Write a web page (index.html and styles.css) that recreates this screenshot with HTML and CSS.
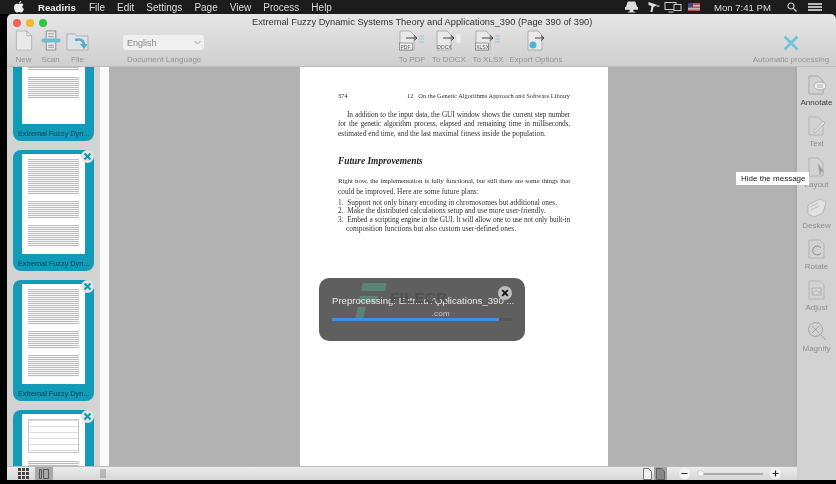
FILE: index.html
```html
<!DOCTYPE html>
<html lang="en">
<head>
<meta charset="utf-8">
<title>Readiris</title>
<link rel="stylesheet" href="styles.css">
</head>
<body>
<div class="screen">
  <header class="menubar">
    <svg class="apple" width="10" height="12" viewBox="0 0 10 12"><path fill="#eee" d="M7.2 0c.1 1-.8 2.400-2.100 2.400C5 1.200 6 .2 7.200 0zM5 3c.6 0 1.300-.5 2.300-.5.8 0 1.700.4 2.200 1.200-1.800 1.100-1.500 3.500.5 4.300-.5 1.300-1.600 3.500-2.800 3.500-.8 0-1.100-.5-2.100-.5s-1.300.5-2.100.5C1.600 11.500 0 8.800 0 6.400 0 4 1.400 2.700 2.800 2.700 3.700 2.700 4.400 3 5 3z"/></svg>
    <span class="menu strong">Readiris</span>
    <span class="menu">File</span><span class="menu">Edit</span><span class="menu">Settings</span><span class="menu">Page</span><span class="menu">View</span><span class="menu">Process</span><span class="menu">Help</span>
    <div class="status">
      <svg class="s1" width="13" height="12" viewBox="0 0 14 12"><path fill="#ddd" d="M3 0h8l2 6H1zM0 6h14v3H0zM5 9h4v2h2v1H3v-1h2z"/></svg>
      <svg class="s2" width="14" height="12" viewBox="0 0 13 12"><path fill="#ddd" d="M1 1l9 3-4 2-1 5H3l1-6-3-1z"/><path fill="#888" d="M9 4h3v2H9z"/></svg>
      <svg class="s3" width="18" height="12" viewBox="0 0 17 12" fill="none" stroke="#ccc"><rect x=".5" y="1.500" width="11" height="7"/><rect x="9.500" y="3.500" width="7" height="6" fill="#1c1c1c"/><path d="M4 11h5"/></svg>
      <svg class="s4" width="12" height="8" viewBox="0 0 12 8"><rect width="12" height="8" fill="#b55"/><rect y="2" width="12" height="1.500" fill="#bbb"/><rect y="5" width="12" height="1.500" fill="#bbb"/><rect width="5" height="4" fill="#448"/></svg>
      <span class="clock">Mon 7:41 PM</span>
      <svg class="s-search" width="10" height="10" viewBox="0 0 10 10" fill="none" stroke="#ccc" stroke-width="1.200"><circle cx="4" cy="4" r="3"/><path d="M6.300 6.300L9.500 9.500"/></svg>
      <svg class="s-list" width="14" height="8" viewBox="0 0 14 8" stroke="#eee" stroke-width="1.300"><path d="M0 1h14M0 4h14M0 7h14"/></svg>
    </div>
  </header>

  <div class="window">
    <div class="toolbar">
      <div class="traffic">
        <i class="dot red"></i><i class="dot yellow"></i><i class="dot green"></i>
        <div class="title">Extremal Fuzzy Dynamic Systems Theory and Applications_390 (Page 390 of 390)</div>
      </div>
      <div class="tools">
        <div class="tool w27">
          <svg width="18" height="22" viewBox="0 0 18 22" fill="#e9e9e9" stroke="#a8a8a8" stroke-width=".8"><path d="M1 1h11l5 5v15H1z"/><path d="M12 1v5h5" fill="none"/></svg>
          <span>New</span>
        </div>
        <div class="tool w27">
          <svg width="20" height="22" viewBox="0 0 20 22" fill="none"><path d="M5 1h10v20H5z" fill="#e6e6e6" stroke="#777" stroke-width=".8"/><path d="M7 4h6M7 7h6M7 16h6M7 18h6" stroke="#777" stroke-width=".7"/><rect x="0" y="9" width="20" height="4" rx="2" fill="#6bbdd3"/></svg>
          <span>Scan</span>
        </div>
        <div class="tool w27">
          <svg width="23" height="18" viewBox="0 0 23 18" fill="none"><path d="M1 1h8l2 2h11v14H1z" fill="#dfe3e5" stroke="#a5a5a5" stroke-width=".8"/><path d="M9 7c4-1 8-1 9 4" stroke="#55adc8" stroke-width="2.400"/><path d="M14 11h8l-4 5z" fill="#55adc8"/></svg>
          <span>File</span>
        </div>
        <div class="lang">
          <div class="select">English<svg width="7" height="5" viewBox="0 0 7 5" fill="none" stroke="#999" stroke-width="1"><path d="M.5 1L3.500 4 6.500 1"/></svg></div>
          <span class="lang-label">Document Language</span>
        </div>
        <div class="tool w36 export-first">
          <svg width="26" height="21" viewBox="0 0 26 21" fill="none"><path d="M1 1h10l4 4v15H1z" fill="#e9e9e9" stroke="#9a9a9a" stroke-width=".7"/><path d="M7 8h11M15 5.500L18 8l-3 2.500" stroke="#333" stroke-width=".9"/><rect x=".5" y="13" width="13" height="7" fill="#eee" stroke="#666" stroke-width=".6"/><text x="1.500" y="19" class="ft">PDF</text><path d="M20 6h5M20 9h5M20 12h5" stroke="#9fbfcf" stroke-width="1"/></svg>
          <span>To PDF</span>
        </div>
        <div class="tool w38">
          <svg width="26" height="21" viewBox="0 0 26 21" fill="none"><path d="M1 1h10l4 4v15H1z" fill="#e9e9e9" stroke="#9a9a9a" stroke-width=".7"/><path d="M7 8h11M15 5.500L18 8l-3 2.500" stroke="#333" stroke-width=".9"/><text x="1.200" y="19" class="ft">DOCX</text><rect x="20" y="4" width="5" height="9" fill="#ececec" stroke="#ddd" stroke-width=".5"/></svg>
          <span>To DOCX</span>
        </div>
        <div class="tool w40">
          <svg width="26" height="21" viewBox="0 0 26 21" fill="none"><path d="M1 1h10l4 4v15H1z" fill="#e9e9e9" stroke="#9a9a9a" stroke-width=".7"/><path d="M7 8h11M15 5.500L18 8l-3 2.500" stroke="#333" stroke-width=".9"/><rect x=".5" y="13" width="13" height="7" fill="#eee" stroke="#666" stroke-width=".6"/><text x="1.200" y="19" class="ft">XLSX</text><path d="M20 6h5M20 9h5M20 12h5" stroke="#9fbfcf" stroke-width="1"/></svg>
          <span>To XLSX</span>
        </div>
        <div class="tool w56">
          <svg width="18" height="21" viewBox="0 0 18 21" fill="none"><path d="M1 1h10l4 4v15H1z" fill="#e9e9e9" stroke="#9a9a9a" stroke-width=".7"/><path d="M8 8h9M14 5.500L17 8l-3 2.500" stroke="#333" stroke-width=".9"/><circle cx="6" cy="15" r="3.500" fill="#4fb3d2"/></svg>
          <span>Export Options</span>
        </div>
        <div class="tool auto">
          <svg width="16" height="16" viewBox="0 0 16 16" stroke="#6fc3dc" stroke-width="2.600"><path d="M1.500 1.500l13 13M14.500 1.500l-13 13"/></svg>
          <span>Automatic processing</span>
        </div>
      </div>
    </div>

    <div class="body">
      <div class="center">
        <div class="work">
          <aside class="sidebar">
            <div class="thumbs">
              <div class="card"><div class="mini"><div class="lines l1"></div><div class="lines l2"></div><div class="lines l3"></div></div><div class="cap">Extremal Fuzzy Dyn...</div></div>
              <div class="card"><svg class="x" width="13" height="13" viewBox="0 0 13 13"><circle cx="6.500" cy="6.500" r="6.500" fill="#e4e4e4"/><path d="M3.500 3.500l6 6M9.500 3.500l-6 6" stroke="#119bb9" stroke-width="2.200"/></svg><div class="mini"><div class="lines l4"></div><div class="lines l2"></div><div class="lines l3"></div></div><div class="cap">Extremal Fuzzy Dyn...</div></div>
              <div class="card"><svg class="x" width="13" height="13" viewBox="0 0 13 13"><circle cx="6.500" cy="6.500" r="6.500" fill="#e4e4e4"/><path d="M3.500 3.500l6 6M9.500 3.500l-6 6" stroke="#119bb9" stroke-width="2.200"/></svg><div class="mini"><div class="lines l4"></div><div class="lines l2"></div><div class="lines l3"></div></div><div class="cap">Extremal Fuzzy Dyn...</div></div>
              <div class="card"><svg class="x" width="13" height="13" viewBox="0 0 13 13"><circle cx="6.500" cy="6.500" r="6.500" fill="#e4e4e4"/><path d="M3.500 3.500l6 6M9.500 3.500l-6 6" stroke="#119bb9" stroke-width="2.200"/></svg><div class="mini"><div class="table"></div><div class="lines l3"></div></div></div>
            </div>
          </aside>
          <div class="strip"></div>
          <main class="stage">
            <article class="page">
              <div class="head"><span>374</span><span>12 &nbsp; On the Genetic Algorithms Approach and Software Library</span></div>
              <p class="j ind">In addition to the input data, the GUI window shows the current step number</p>
              <p class="j">for the genetic algorithm process, elapsed and remaining time in milliseconds,</p>
              <p>estimated end time, and the last maximal fitness inside the population.</p>
              <h2>Future Improvements</h2>
              <p class="j tight">Right now, the implementation is fully functional, but still there are some things that</p>
              <p class="gap">could be improved. Here are some future plans:</p>
              <p class="li">1.&nbsp; Support not only binary encoding in chromosomes but additional ones.</p>
              <p class="li">2.&nbsp; Make the distributed calculations setup and use more user-friendly.</p>
              <p class="j li">3.&nbsp; Embed a scripting engine in the GUI. It will allow one to use not only built-in</p>
              <p class="li li2">composition functions but also custom user-defined ones.</p>
            </article>
            <div class="hud">
              <svg class="logo" width="34" height="36" viewBox="0 0 34 36" fill="#5c8e7c"><path d="M8 0h24l-2 8H6zM5 13h18l-2 7H3zM3 24h8l-3 12H0z"/></svg>
              <div class="hud-text">Preprocessing: Extr...d Applications_390 ...</div>
              <div class="bar"><div class="fill"></div></div>
              <div class="mark">FILECR<small>.com</small></div>
              <svg class="hud-x" width="14" height="14" viewBox="0 0 14 14"><circle cx="7" cy="7" r="7" fill="#bdbdbd"/><path d="M4.200 4.200l5.600 5.600M9.800 4.200l-5.600 5.600" stroke="#111" stroke-width="1.800"/></svg>
            </div>
          </main>
        </div>
        <footer class="statusbar">
          <div class="sb-left">
            <svg class="grid" width="11" height="11" viewBox="0 0 11 11" fill="#444"><path d="M0 0h3v3H0zM4 0h3v3H4zM8 0h3v3H8zM0 4h3v3H0zM4 4h3v3H4zM8 4h3v3H8zM0 8h3v3H0zM4 8h3v3H4zM8 8h3v3H8z"/></svg>
            <div class="sb-active"><svg width="10" height="10" viewBox="0 0 10 10" fill="none" stroke="#555"><path d="M.5 .5h2v9h-2zM4.500 .5h5v9h-5z"/></svg></div>
            <svg class="grip" width="6" height="9" viewBox="0 0 6 9" stroke="#777" stroke-width=".8"><path d="M1 0v9M3 0v9M5 0v9"/></svg>
          </div>
          <div class="sb-right">
            <svg width="9" height="12" viewBox="0 0 9 12" fill="#eee" stroke="#555" stroke-width=".8"><path d="M.5 .5h5l3 3v8h-8z"/></svg>
            <div class="sb-active2"><svg width="9" height="12" viewBox="0 0 9 12" fill="#888" stroke="#555" stroke-width=".8"><path d="M.5 .5h5l3 3v8h-8z"/></svg></div>
            <svg class="zb" width="11" height="11" viewBox="0 0 11 11"><circle cx="5.500" cy="5.500" r="5.500" fill="#f4f4f4"/><path d="M2.500 5.500h6" stroke="#222" stroke-width="1.200"/></svg>
            <div class="slider"><i class="knob"></i></div>
            <svg class="zb" width="11" height="11" viewBox="0 0 11 11"><circle cx="5.500" cy="5.500" r="5.500" fill="#f4f4f4"/><path d="M2.500 5.500h6M5.500 2.500v6" stroke="#222" stroke-width="1.200"/></svg>
          </div>
        </footer>
      </div>
      <nav class="panel">
        <div class="ptool on">
          <svg width="20" height="20" viewBox="0 0 20 20" fill="none" stroke="#999" stroke-width=".7"><path d="M2 1h9l5 5v13H2z"/><ellipse cx="13" cy="11" rx="6" ry="4" fill="#eee"/><path d="M10 10h6M10 12h6"/></svg>
          <span>Annotate</span>
        </div>
        <div class="ptool">
          <svg width="20" height="20" viewBox="0 0 20 20" fill="none" stroke="#aaa" stroke-width=".7"><path d="M2 1h9l5 5v13H2z"/><path d="M6 16L16 5l2 2L8 17z" fill="#ddd"/></svg>
          <span>Text</span>
        </div>
        <div class="ptool">
          <svg width="20" height="20" viewBox="0 0 20 20" fill="none" stroke="#aaa" stroke-width=".7"><path d="M2 1h9l5 5v13H2z"/><path d="M11 7l6 8-3-1-1 4z" fill="#999"/></svg>
          <span>Layout</span>
        </div>
        <div class="ptool">
          <svg width="22" height="20" viewBox="0 0 22 20" fill="none" stroke="#aaa" stroke-width=".7"><path d="M2 7L14 1l6 3-3 11-9 4-6-3z" fill="#e2e2e2"/><path d="M4 9l8-4M5 12l8-4"/></svg>
          <span>Deskew</span>
        </div>
        <div class="ptool">
          <svg width="20" height="20" viewBox="0 0 20 20" fill="none" stroke="#aaa" stroke-width=".7"><path d="M2 1h11l4 4v14H2z"/><path d="M14 9a4.500 4.500 0 1 0 0 5" stroke="#888" stroke-width="1"/></svg>
          <span>Rotate</span>
        </div>
        <div class="ptool">
          <svg width="20" height="20" viewBox="0 0 20 20" fill="none" stroke="#aaa" stroke-width=".7"><path d="M2 1h11l4 4v14H2z"/><path d="M5 8h9v7H5zM5 14l4-4 3 3 2-2"/></svg>
          <span>Adjust</span>
        </div>
        <div class="ptool">
          <svg width="20" height="20" viewBox="0 0 20 20" fill="none" stroke="#999" stroke-width=".8"><circle cx="8.500" cy="8.500" r="7"/><path d="M5 5l7 7M12 5l-7 7M13.500 13.500L19 19"/></svg>
          <span>Magnify</span>
        </div>
      </nav>
      <div class="tip">Hide the message</div>
    </div>
  </div>
</div>
</body>
</html>
```

FILE: styles.css
```css
* { box-sizing: border-box; }
html, body { margin: 0; padding: 0; }
body { font-family: "Liberation Sans", Arial, sans-serif; background: #000; }
.screen { width: 836px; height: 484px; background: #000; display: flex; flex-direction: column; overflow: hidden; filter: blur(.4px); }

.menubar { height: 14px; flex: none; background: #1c1c1c; color: #ddd; font-size: 10px; display: flex; align-items: center; padding-left: 14px; }
.apple { flex: none; margin-right: 14px; }
.menu { margin-right: 12px; white-space: nowrap; }
.strong { font-weight: bold; font-size: 9.6px; color: #f2f2f2; margin-right: 13px; }
.status { margin-left: auto; display: flex; align-items: center; padding-right: 14px; }
.s2 { margin-left: 9px; }
.s3 { margin-left: 3px; }
.s4 { margin-left: 6px; }
.clock { margin: 0 16px 0 14px; white-space: nowrap; font-size: 9.6px; }
.s-list { margin-left: 11px; }

.window { height: 466px; margin-left: 7px; flex: none; display: flex; flex-direction: column; border-radius: 5px 5px 0 0; overflow: hidden; position: relative; }
.toolbar { height: 53px; flex: none; background: linear-gradient(#e6e6e6, #cfcfcf); border-bottom: 1px solid #bdbdbd; }
.traffic { height: 16px; display: flex; align-items: center; padding: 1px 0 0 6px; gap: 5px; position: relative; }
.dot { width: 8px; height: 8px; border-radius: 50%; display: block; }
.red { background: #f4605a; }
.yellow { background: #f5b52e; }
.green { background: #2fc741; }
.title { position: absolute; left: 245px; top: 3px; font-size: 9.3px; color: #333; white-space: nowrap; }

.tools { display: flex; padding-left: 3px; height: 36px; }
.tool { display: flex; flex-direction: column; align-items: center; justify-content: flex-end; flex: none; height: 35px; font-size: 8px; color: #949494; white-space: nowrap; }
.tool span { height: 11px; line-height: 11px; margin-top: 3px; }
.w27 { width: 27px; }
.w36 { width: 36px; }
.w38 { width: 38px; }
.w40 { width: 40px; }
.w56 { width: 56px; }
.ft { font: 5px "Liberation Sans", Arial, sans-serif; fill: #555; stroke: none; }
.lang { width: 81px; margin-left: 32px; flex: none; display: flex; flex-direction: column; font-size: 8px; color: #949494; }
.select { height: 15px; margin-top: 5px; background: #f0f0f0; border-radius: 3px; font-size: 9px; color: #8a8a8a; display: flex; align-items: center; justify-content: space-between; padding: 0 3px 0 4px; }
.lang-label { height: 11px; line-height: 11px; margin-top: 4px; padding-left: 4px; white-space: nowrap; }
.export-first { margin-left: 190px; }
.auto { margin-left: auto; margin-right: 5px; width: 80px; }

.body { flex: 1; display: flex; min-height: 0; position: relative; background: #000; }
.center { flex: 1; display: flex; flex-direction: column; min-width: 0; }
.work { flex: 1; display: flex; min-height: 0; }
.sidebar { width: 93px; flex: none; background: #d3d3d3; overflow: hidden; padding-left: 6px; }
.thumbs { display: flex; flex-direction: column; gap: 9px; margin-top: -47px; }
.card { width: 81px; height: 121px; flex: none; background: #119bb9; border-radius: 8px; position: relative; padding: 4px 9px 0; }
.mini { height: 100px; background: #fff; padding: 5px 6px; overflow: hidden; }
.lines { background: repeating-linear-gradient(#bdbdbd 0 1px, #f6f6f6 1px 2px); margin-bottom: 6px; }
.l1 { height: 18px; }
.l2 { height: 18px; }
.l3 { height: 22px; }
.l4 { height: 36px; }
.table { height: 34px; border: 1px solid #c8c8c8; margin-bottom: 8px; background: repeating-linear-gradient(#dcdcdc 0 1px, #fff 1px 6px); }
.cap { font-size: 7.3px; color: #0d3d4d; line-height: 17px; padding-top: 1px; white-space: nowrap; margin-left: -4px; }
.x { position: absolute; right: 0; top: 0; }
.strip { width: 9px; flex: none; background: #fafafa; }
.stage { flex: 1; background: #b2b2b2; border-right: 2px solid #a9a9a9; position: relative; overflow: hidden; padding-left: 191px; }
.page { width: 308px; height: 100%; background: #fff; padding: 24px 38px 0; font-family: "Liberation Serif", "Times New Roman", serif; font-size: 7.4px; line-height: 9.6px; color: #333; }
.page p { margin: 0; white-space: nowrap; }
.page .j { white-space: normal; text-align: justify; text-align-last: justify; letter-spacing: -.15px; }
.page .tight { font-size: 7.1px; letter-spacing: -.2px; }
.head { display: flex; justify-content: space-between; font-size: 6.4px; margin-bottom: 9px; white-space: nowrap; }
.page .ind { padding-left: 9px; }
.page h2 { margin: 17px 0 10px; font-size: 9.4px; line-height: 12px; font-style: italic; font-weight: bold; color: #222; }
.page .gap { margin-bottom: 2px; }
.page .li { line-height: 8.9px; }
.page .li2 { padding-left: 8px; }

.hud { position: absolute; left: 210px; top: 211px; width: 206px; height: 63px; background: #5f5f5f; border-radius: 10px; }
.hud-text { position: absolute; left: 13px; top: 17px; width: 182px; color: #e8e8e8; font-size: 9.6px; white-space: nowrap; }
.bar { position: absolute; left: 13px; top: 40px; width: 180px; height: 3px; background: #555; }
.fill { width: 167px; height: 100%; background: #3f8fe6; }
.logo { position: absolute; left: 36px; top: 5px; opacity: .8; }
.mark { position: absolute; left: 71px; top: 12px; width: 60px; font-size: 15.5px; line-height: 16px; font-weight: bold; color: #505050; letter-spacing: .3px; }
.mark small { display: block; font-size: 8px; line-height: 9px; text-align: right; color: #c8c8c8; font-weight: normal; margin-top: 3px; }
.hud-x { position: absolute; right: 13px; top: 8px; }

.statusbar { height: 14px; flex: none; display: flex; background: linear-gradient(#ececec, #d6d6d6); border-top: 1px solid #bcbcbc; }
.sb-left { width: 102px; flex: none; display: flex; align-items: center; padding-left: 11px; }
.grid { flex: none; }
.sb-active { width: 18px; height: 13px; margin-left: 6px; background: #a8a8a8; display: flex; align-items: center; justify-content: center; }
.grip { margin-left: 47px; }
.sb-right { flex: 1; display: flex; align-items: center; justify-content: flex-end; padding-right: 16px; }
.sb-active2 { width: 13px; height: 13px; margin: 0 12px 0 2px; background: #a0a0a0; display: flex; align-items: center; justify-content: center; }
.zb { flex: none; }
.slider { width: 66px; height: 2px; background: #aaa; margin: 0 7px; position: relative; }
.knob { position: absolute; left: 0; top: -3px; width: 7px; height: 7px; border-radius: 50%; background: #f6f6f6; border: 1px solid #ccc; }

.panel { width: 39px; flex: none; background: #d2d2d2; padding-top: 8px; display: flex; flex-direction: column; }
.ptool { height: 41px; flex: none; display: flex; flex-direction: column; align-items: center; font-size: 8px; color: #8f8f8f; white-space: nowrap; }
.ptool span { line-height: 10px; margin-top: 3px; }
.ptool.on { color: #3d3d3d; }
.tip { position: absolute; left: 729px; top: 105px; width: 73px; height: 13px; background: #fff; color: #222; font-size: 8px; line-height: 13px; padding-left: 5px; white-space: nowrap; }
```
